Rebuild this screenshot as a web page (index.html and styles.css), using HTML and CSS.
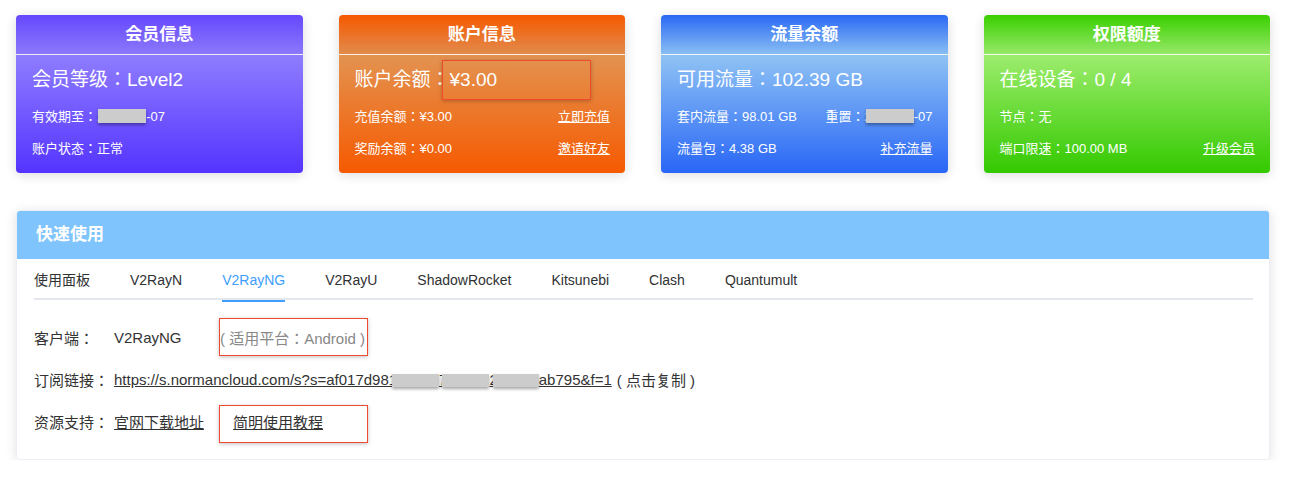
FILE: index.html
```html
<!DOCTYPE html>
<html lang="zh-CN">
<head>
<meta charset="utf-8">
<title>用户中心</title>
<link rel="stylesheet" href="styles.css">
</head>
<body>
<div class="page">
  <div class="cards">
    <div class="card card-purple">
      <div class="card-head">会员信息</div>
      <div class="card-body">
        <div class="big">会员等级：Level2</div>
        <div class="row"><span>有效期至：2<span class="redact"></span>-07</span></div>
        <div class="row"><span>账户状态：正常</span></div>
      </div>
    </div>
    <div class="card card-orange">
      <div class="card-head">账户信息</div>
      <div class="card-body">
        <div class="big">账户余额：<span class="amount">¥3.00</span></div>
        <div class="row"><span>充值余额：¥3.00</span><a class="lnk">立即充值</a></div>
        <div class="row"><span>奖励余额：¥0.00</span><a class="lnk">邀请好友</a></div>
      </div>
    </div>
    <div class="card card-blue">
      <div class="card-head">流量余额</div>
      <div class="card-body">
        <div class="big">可用流量：102.39 GB</div>
        <div class="row"><span>套内流量：98.01 GB</span><span>重置：2<span class="redact"></span>-07</span></div>
        <div class="row"><span>流量包：4.38 GB</span><a class="lnk">补充流量</a></div>
      </div>
    </div>
    <div class="card card-green">
      <div class="card-head">权限额度</div>
      <div class="card-body">
        <div class="big">在线设备：0 / 4</div>
        <div class="row"><span>节点：无</span></div>
        <div class="row"><span>端口限速：100.00 MB</span><a class="lnk">升级会员</a></div>
      </div>
    </div>
  </div>

  <div class="panel">
    <div class="panel-head">快速使用</div>
    <div class="panel-body">
      <div class="tabs">
        <div class="tab">使用面板</div>
        <div class="tab">V2RayN</div>
        <div class="tab active">V2RayNG</div>
        <div class="tab">V2RayU</div>
        <div class="tab">ShadowRocket</div>
        <div class="tab">Kitsunebi</div>
        <div class="tab">Clash</div>
        <div class="tab">Quantumult</div>
      </div>
      <div class="info">
        <div class="info-row">
          <span class="label">客户端：</span>
          <span class="value">V2RayNG</span>
          <span class="mark plat">( 适用平台：Android )</span>
        </div>
        <div class="info-row">
          <span class="label">订阅链接：</span>
          <a class="ulink url">https://s.normancloud.com/s?s=af017d981<span class="redact r1"></span>7<span class="redact r2"></span>2<span class="redact r3"></span>ab795&amp;f=1</a>
          <span class="copy">( 点击复制 )</span>
        </div>
        <div class="info-row">
          <span class="label">资源支持：</span>
          <span class="value"><a class="ulink">官网下载地址</a></span>
          <span class="mark guide"><a class="ulink">简明使用教程</a></span>
        </div>
      </div>
    </div>
  </div>
</div>
</body>
</html>
```
FILE: styles.css
```css
* { box-sizing: border-box; }
html, body { margin: 0; padding: 0; background: #ffffff; }
body {
  font-family: "Liberation Sans", "Noto Sans CJK JP", "Noto Sans CJK SC", Arial, sans-serif;
  font-feature-settings: "locl" 0;
  color: #303133;
  width: 1291px;
}
.page { padding: 15px 21px 0 16px; }

.cards {
  display: grid;
  grid-template-columns: repeat(4, 1fr);
  column-gap: 36px;
}
.card {
  height: 158px;
  border-radius: 4px;
  color: #ffffff;
  box-shadow: 0 2px 12px rgba(0, 0, 0, 0.14);
}
.card-purple { background: linear-gradient(to bottom, #6548fd 0%, #8a77fb 24%, #8e7cff 26%, #5434ff 100%); }
.card-orange { background: linear-gradient(to bottom, #f65900 0%, #e2894a 24%, #e39250 26%, #f65a00 100%); }
.card-blue   { background: linear-gradient(to bottom, #2a68f4 0%, #86bcf3 24%, #8ec2f4 26%, #2966f6 100%); }
.card-green  { background: linear-gradient(to bottom, #3acf00 0%, #93e865 24%, #9cec6c 26%, #33c900 100%); }

.card-head {
  height: 40px;
  line-height: 39px;
  text-align: center;
  font-size: 17px;
  font-weight: bold;
  border-bottom: 1px solid rgba(255, 255, 255, 0.85);
}
.card-body { padding: 12px 15px 10px 16px; }
.big {
  font-size: 19px;
  line-height: 26px;
  height: 26px;
  margin-bottom: 6px;
  white-space: nowrap;
}
.amount {
  position: relative;
  display: inline-block;
}
.amount::after {
  content: "";
  position: absolute;
  left: -8px;
  top: -7px;
  width: 147px;
  height: 38px;
  border: 1.5px solid #ee4a30;
  box-shadow: 0 1px 4px rgba(0, 0, 0, 0.25);
}
.row {
  display: flex;
  justify-content: space-between;
  align-items: center;
  height: 32px;
  font-size: 13px;
  white-space: nowrap;
}
.lnk { color: #ffffff; text-decoration: underline; }
.redact {
  display: inline-block;
  width: 48px;
  height: 14px;
  vertical-align: -2px;
  background: #cccccc;
  box-shadow: 0 2px 3px rgba(0, 0, 0, 0.35);
  margin-left: -6px;
  margin-right: 0;
}

.panel {
  margin-top: 37px;
  height: 250px;
  border-radius: 4px;
  border: 1px solid #ebeef5;
  box-shadow: 0 2px 12px rgba(0, 0, 0, 0.12);
  overflow: hidden;
}
.panel-head {
  height: 48px;
  line-height: 48px;
  background: #7fc4fd;
  color: #ffffff;
  font-size: 17px;
  font-weight: bold;
  padding-left: 19px;
}
.panel-body { padding: 1px 16px 18px 17px; }
.tabs {
  display: flex;
  gap: 40px;
  height: 40px;
  border-bottom: 2px solid #e4e7ed;
  font-size: 14px;
}
.tab {
  line-height: 40px;
  height: 40px;
  color: #303133;
  position: relative;
}
.tab.active { color: #409eff; }
.tab.active::after {
  content: "";
  position: absolute;
  left: 0;
  right: 0;
  bottom: -2px;
  height: 2px;
  background: #409eff;
}
.info { margin-top: 16px; font-size: 15px; }
.info-row {
  display: flex;
  align-items: center;
  height: 42px;
  white-space: nowrap;
}
.label { width: 80px; color: #333333; }
.value { width: 105px; color: #333333; }
.ulink { color: #333333; text-decoration: underline; }
.url { font-size: 15px; }
.ulink .redact { height: 13px; vertical-align: -2px; }
.r1 { width: 47px; margin-left: -5px; }
.r2 { width: 47px; margin-left: -5px; }
.r3 { width: 46px; margin-left: -5px; }
.copy { color: #333333; margin-left: 5px; }
.mark {
  display: inline-flex;
  align-items: center;
  width: 149px;
  height: 38px;
  border: 1.5px solid #ee4a30;
  box-shadow: 0 1px 4px rgba(0, 0, 0, 0.25);
}
.plat { color: #888888; padding-left: 0; }
.guide { padding-left: 13px; margin-top: 6px; padding-bottom: 6px; }
```
